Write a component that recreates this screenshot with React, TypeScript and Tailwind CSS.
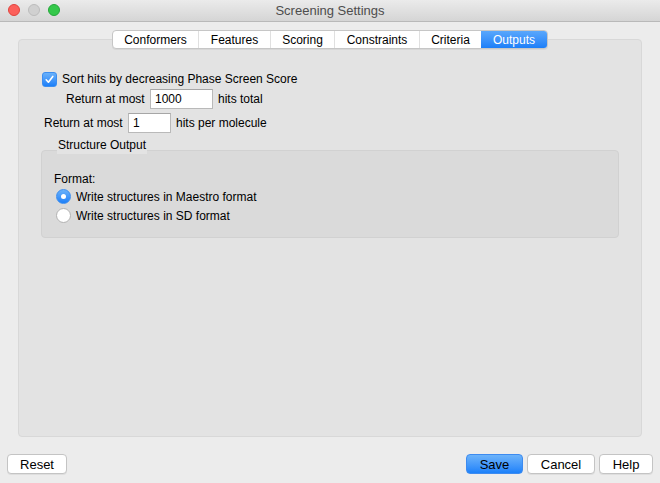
import { useState } from "react";

const tabs = ["Conformers", "Features", "Scoring", "Constraints", "Criteria", "Outputs"];
const tabWidths = ["w-[85px]", "w-[72px]", "w-[64px]", "w-[85px]", "w-[62px]", "w-[66px]"];

function Checkbox({ checked }: { checked: boolean }) {
  return (
    <div
      className={`w-[15px] h-[15px] rounded-[3px] flex items-center justify-center ${
        checked
          ? "bg-gradient-to-b from-[#69b1fa] to-[#1a7ff8] border border-[#3c8ef0]"
          : "bg-white border border-[#b5b5b5]"
      }`}
    >
      {checked && (
        <svg width="11" height="11" viewBox="0 0 11 11">
          <path d="M2.2 5.8 L4.4 8.2 L8.8 2.4" fill="none" stroke="white" strokeWidth="1.6" strokeLinecap="round" strokeLinejoin="round" />
        </svg>
      )}
    </div>
  );
}

function Radio({ on }: { on: boolean }) {
  return (
    <div
      className={`w-[15px] h-[15px] rounded-full flex items-center justify-center ${
        on
          ? "bg-gradient-to-b from-[#69b1fa] to-[#1a7ff8] border border-[#3c8ef0]"
          : "bg-white border border-[#b2b2b2]"
      }`}
    >
      {on && <div className="w-[5px] h-[5px] rounded-full bg-white" />}
    </div>
  );
}

function Btn({ label, w, primary }: { label: string; w: string; primary?: boolean }) {
  return (
    <button
      className={`${w} h-[20px] rounded-[4px] text-[13px] text-black leading-none flex items-center justify-center ${
        primary
          ? "bg-gradient-to-b from-[#6cb3fa] to-[#1b81fa] border border-[#3d8bf0]"
          : "bg-white border border-[#c4c4c4] shadow-[0_1px_0_rgba(0,0,0,0.06)]"
      }`}
    >
      {label}
    </button>
  );
}

export default function App() {
  const [active] = useState("Outputs");

  return (
    <div
      className="w-[660px] h-[483px] bg-[#ececec] flex flex-col text-black overflow-hidden"
      style={{ fontFamily: '"Liberation Sans", Arial, sans-serif' }}
    >
      {/* Title bar */}
      <div className="relative h-[22px] shrink-0 bg-gradient-to-b from-[#ebebeb] to-[#d5d5d5] border-b border-[#b9b9b9] flex items-center justify-center">
        <div className="absolute left-[8px] top-[4px] flex gap-[8px]">
          <div className="w-[12px] h-[12px] rounded-full bg-[#fc605b] border border-[#e0443e]" />
          <div className="w-[12px] h-[12px] rounded-full bg-[#d0d0d0] border border-[#bcbcbc]" />
          <div className="w-[12px] h-[12px] rounded-full bg-[#34c84a] border border-[#24a73a]" />
        </div>
        <span className="text-[13px] text-[#4d4d4d]">Screening Settings</span>
      </div>

      {/* Body */}
      <div className="flex-1 flex flex-col pt-[8px]">
        {/* Tabs */}
        <div className="relative z-10 flex justify-center">
          <div className="flex h-[19px] rounded-[4px] bg-white border border-[#c6c6c6] shadow-[0_1px_0_rgba(0,0,0,0.05)] overflow-hidden">
            {tabs.map((t, i) => (
              <div
                key={t}
                className={`${tabWidths[i]} h-full flex items-center justify-center text-[12px] ${
                  t === active
                    ? "bg-gradient-to-b from-[#59a7fc] to-[#1b7ff8] text-white"
                    : "text-black"
                } ${i > 0 && t !== active && tabs[i - 1] !== active ? "border-l border-[#e0e0e0]" : ""}`}
              >
                {t}
              </div>
            ))}
          </div>
        </div>

        {/* Panel */}
        <div className="mx-[18px] -mt-[10px] h-[398px] bg-[#e3e3e3] border border-[#d8d8d8] rounded-[4px] pt-[31px] text-[12px]">
          <div className="pl-[23px] flex items-center gap-[5px] h-[16px]">
            <Checkbox checked />
            <span>Sort hits by decreasing Phase Screen Score</span>
          </div>

          <div className="pl-[47px] mt-[2px] flex items-center h-[20px]">
            <span className="w-[84px]">Return at most</span>
            <div className="w-[63px] h-[20px] bg-white border border-[#b9b9b9] border-t-[#a6a6a6] flex items-center pl-[4px]">1000</div>
            <span className="ml-[5px]">hits total</span>
          </div>

          <div className="pl-[25px] mt-[4px] flex items-center h-[20px]">
            <span className="w-[84px]">Return at most</span>
            <div className="w-[43px] h-[20px] bg-white border border-[#b9b9b9] border-t-[#a6a6a6] flex items-center pl-[4px]">1</div>
            <span className="ml-[5px]">hits per molecule</span>
          </div>

          <div className="pl-[38px] mt-[4px] h-[16px] flex items-center">
            <span className="relative z-10 bg-[#e3e3e3] px-[1px]">Structure Output</span>
          </div>

          <div className="mx-[22px] -mt-[3px] h-[88px] bg-[#dadada] border border-[#d1d1d1] rounded-[4px] pl-[12px] pt-[21px]">
            <div className="h-[14px] flex items-center">Format:</div>
            <div className="mt-[3px] flex items-center gap-[5px] h-[15px] ml-[2px]">
              <Radio on />
              <span>Write structures in Maestro format</span>
            </div>
            <div className="mt-[4px] flex items-center gap-[5px] h-[15px] ml-[2px]">
              <Radio on={false} />
              <span>Write structures in SD format</span>
            </div>
          </div>
        </div>

        {/* Buttons */}
        <div className="flex items-center mt-[17px] px-[7px]">
          <Btn label="Reset" w="w-[60px]" />
          <div className="flex-1" />
          <div className="flex gap-[4px]">
            <Btn label="Save" w="w-[57px]" primary />
            <Btn label="Cancel" w="w-[68px]" />
            <Btn label="Help" w="w-[54px]" />
          </div>
        </div>
      </div>
    </div>
  );
}
